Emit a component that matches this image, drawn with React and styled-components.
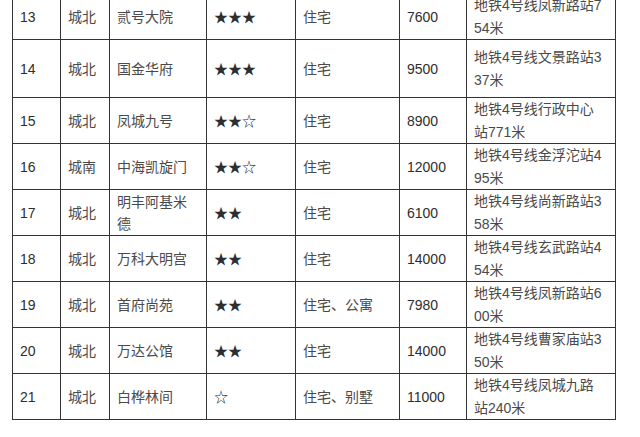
import React from 'react';
import styled, { createGlobalStyle } from 'styled-components';

const GlobalStyle = createGlobalStyle`
  html, body {
    margin: 0;
    padding: 0;
    background: #ffffff;
  }
`;

const rows = [
  { no: 13, area: '城北', name: '贰号大院', stars: '★★★', type: '住宅', price: '7600', metro: ['地铁4号线凤新路站7', '54米'], h: 45 },
  { no: 14, area: '城北', name: '国金华府', stars: '★★★', type: '住宅', price: '9500', metro: ['地铁4号线文景路站3', '37米'], h: 58 },
  { no: 15, area: '城北', name: '凤城九号', stars: '★★☆', type: '住宅', price: '8900', metro: ['地铁4号线行政中心', '站771米'], h: 45 },
  { no: 16, area: '城南', name: '中海凯旋门', stars: '★★☆', type: '住宅', price: '12000', metro: ['地铁4号线金浮沱站4', '95米'], h: 45 },
  { no: 17, area: '城北', name: '明丰阿基米德', stars: '★★', type: '住宅', price: '6100', metro: ['地铁4号线尚新路站3', '58米'], h: 45 },
  { no: 18, area: '城北', name: '万科大明宫', stars: '★★', type: '住宅', price: '14000', metro: ['地铁4号线玄武路站4', '54米'], h: 45 },
  { no: 19, area: '城北', name: '首府尚苑', stars: '★★', type: '住宅、公寓', price: '7980', metro: ['地铁4号线凤新路站6', '00米'], h: 45 },
  { no: 20, area: '城北', name: '万达公馆', stars: '★★', type: '住宅', price: '14000', metro: ['地铁4号线曹家庙站3', '50米'], h: 45 },
  { no: 21, area: '城北', name: '白桦林间', stars: '☆', type: '住宅、别墅', price: '11000', metro: ['地铁4号线凤城九路', '站240米'], h: 45 },
];

const widths = [48, 49, 97, 89, 104, 67, 149];

const Page = styled.div`
  padding-left: 12px;
  margin-top: -7px;
`;

const Table = styled.table`
  border-collapse: collapse;
  table-layout: fixed;
  width: 604px;
  font-family: "Liberation Sans", "Noto Sans CJK SC", sans-serif;
  font-size: 14px;
  color: #3a3a3a;
`;

const Row = styled.tr`
  height: ${(p) => p.$h}px;
`;

const Cell = styled.td`
  border: 1px solid #333333;
  padding: 0 7px;
  line-height: 22px;
  vertical-align: middle;
  text-align: left;
  color: ${(p) => (p.$dark ? '#2e2e2e' : '#4a4a4a')};
  word-break: break-all;
`;

const Line = styled.div`
  white-space: nowrap;
  line-height: 22.5px;
`;

export default function App() {
  return (
    <Page>
      <GlobalStyle />
      <Table>
        <colgroup>
          {widths.map((w, i) => (
            <col key={i} style={{ width: w }} />
          ))}
        </colgroup>
        <tbody>
          {rows.map((r) => (
            <Row key={r.no} $h={r.h}>
              <Cell $dark>{r.no}</Cell>
              <Cell>{r.area}</Cell>
              <Cell>{r.name}</Cell>
              <Cell $dark>{r.stars}</Cell>
              <Cell>{r.type}</Cell>
              <Cell $dark>{r.price}</Cell>
              <Cell>
                {r.metro.map((l) => (
                  <Line key={l}>{l}</Line>
                ))}
              </Cell>
            </Row>
          ))}
        </tbody>
      </Table>
    </Page>
  );
}
